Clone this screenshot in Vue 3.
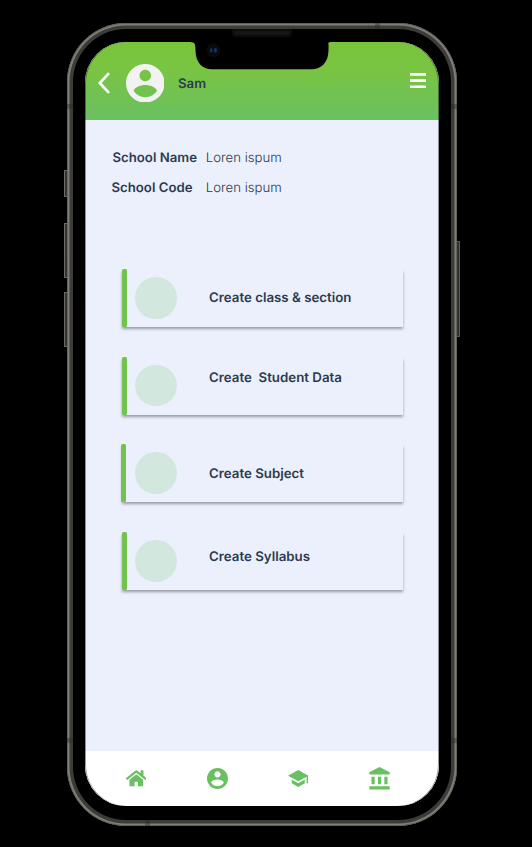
<script setup>
const fields = [
  { label: 'School Name', value: 'Loren ispum', key: 'name' },
  { label: 'School Code', value: 'Loren ispum', key: 'code' },
]
const cards = [
  { title: 'Create class & section', key: 'section' },
  { title: 'Create  Student Data', key: 'student' },
  { title: 'Create Subject', key: 'subject' },
  { title: 'Create Syllabus', key: 'syllabus' },
]
const accountPath =
  'M12 2C6.48 2 2 6.48 2 12s4.48 10 10 10 10-4.48 10-10S17.52 2 12 2zm0 3c1.66 0 3 1.34 3 3s-1.34 3-3 3-3-1.34-3-3 1.34-3 3-3zm0 14.2c-2.5 0-4.71-1.28-6-3.22.03-1.99 4-3.08 6-3.08 1.99 0 5.97 1.09 6 3.08-1.29 1.94-3.5 3.22-6 3.22z'
const nav = [
  {
    key: 'home',
    box: '0 32 576 448',
    path: 'M280.37 148.26L96 300.11V464a16 16 0 0 0 16 16l112.06-.29a16 16 0 0 0 15.92-16V368a16 16 0 0 1 16-16h64a16 16 0 0 1 16 16v95.64a16 16 0 0 0 16 16.05L464 480a16 16 0 0 0 16-16V300L295.67 148.26a12.19 12.19 0 0 0-15.3 0zM571.6 251.47L488 182.56V44.05a12 12 0 0 0-12-12h-56a12 12 0 0 0-12 12v72.61L318.47 43a48 48 0 0 0-61 0L4.34 251.47a12 12 0 0 0-1.6 16.9l25.5 31A12 12 0 0 0 45.15 301l235.22-193.74a12.19 12.19 0 0 1 15.3 0L530.9 301a12 12 0 0 0 16.9-1.6l25.5-31a12 12 0 0 0-1.7-16.93z',
  },
  { key: 'account', box: '2 2 20 20', path: accountPath },
  {
    key: 'school',
    box: '1 3 22 18',
    path: 'M5 13.18v4L12 21l7-3.82v-4L12 17l-7-3.82zM12 3L1 9l11 6 9-4.91V17h2V9L12 3z',
  },
  {
    key: 'bank',
    box: '2 1 19 21',
    path: 'M4 10v7h3v-7H4zm6 0v7h3v-7h-3zM2 22h19v-3H2v3zm14-12v7h3v-7h-3zm-4.5-9L2 6v2h19V6l-9.5-5z',
  },
]
</script>

<template>
  <div class="stage">
    <div class="phone">
      <i class="button mute"></i>
      <i class="button volume-up"></i>
      <i class="button volume-down"></i>
      <i class="button power"></i>
      <i class="band band-tr"></i>
      <i class="band band-bl"></i>
      <i class="band band-l1"></i>
      <i class="band band-l2"></i>
      <i class="band band-r1"></i>
      <i class="band band-r2"></i>
      <div class="bezel">
        <i class="speaker"></i>
        <div class="screen">
          <header class="header">
            <svg class="back" viewBox="0 0 12 22"><path d="M11 1.2 1.8 11l9.2 9.8" /></svg>
            <svg class="avatar" viewBox="2 2 20 20"><path :d="accountPath" /></svg>
            <span class="user">Sam</span>
            <svg class="menu" viewBox="0 0 16 16">
              <path d="M0 0h16v2.7H0zM0 6.2h16v2.7H0zM0 12.4h16v2.7H0z" />
            </svg>
          </header>
          <main class="content">
            <dl class="fields">
              <div v-for="f in fields" :key="f.key" class="field" :class="f.key">
                <dt>{{ f.label }}</dt>
                <dd>{{ f.value }}</dd>
              </div>
            </dl>
            <div class="cards">
              <div v-for="c in cards" :key="c.key" class="card" :class="c.key">
                <i class="accent"></i>
                <i class="dot"></i>
                <span class="title">{{ c.title }}</span>
              </div>
            </div>
          </main>
          <nav class="nav">
            <span v-for="n in nav" :key="n.key" class="slot">
              <svg :class="n.key" :viewBox="n.box"><path :d="n.path" /></svg>
            </span>
          </nav>
        </div>
        <svg class="notch" viewBox="0 0 142 30">
          <path d="M3 0V2.3C6 2.3 7.2 3.4 7.3 7L7.6 12C8 22 14 29.3 24 29.3H123.5C133.5 29.3 140 22 140.4 12L140.6 7C140.7 3.4 139.5 2.3 142 2.3V0Z" />
          <circle cx="25.5" cy="10.4" r="7" fill="#080a0c" />
          <circle cx="25.5" cy="10.4" r="4" fill="#060c16" />
          <ellipse cx="23.2" cy="10.3" rx="1.3" ry="2.4" fill="#12343b" />
          <ellipse cx="27.5" cy="10.4" rx="1.6" ry="2.4" fill="#12306e" />
        </svg>
      </div>
    </div>
  </div>
</template>

<style>
body {
  margin: 0;
  background: #000;
}
</style>

<style scoped>
.stage {
  box-sizing: border-box;
  width: 532px;
  height: 847px;
  padding: 23px 75px 21px 67px;
  background: #000;
  overflow: hidden;
  font-family: Inter, "Liberation Sans", sans-serif;
  color: #2b3a4f;
  text-rendering: geometricPrecision;
}
.phone {
  position: relative;
  box-sizing: border-box;
  height: 803px;
  padding: 6px;
  border-radius: 59px;
  background: #3d3c39;
  box-shadow: inset 0 0 0 0.7px #5a5956, inset 0 0 0 2.5px #7f7d7a;
}
.bezel {
  position: relative;
  box-sizing: border-box;
  height: 100%;
  padding: 13px 12px 14px;
  border-radius: 53px;
  background: #000;
}
.button {
  position: absolute;
  left: -3px;
  box-sizing: border-box;
  width: 3px;
  border: 1px solid #6d6c69;
  border-right: 0;
  border-radius: 1px 0 0 1px;
  background: #33322f;
}
.mute { top: 147px; height: 27px; }
.volume-up { top: 200px; height: 55px; }
.volume-down { top: 269px; height: 55px; }
.power {
  left: auto;
  right: -3px;
  top: 218px;
  height: 96px;
  border: 1px solid #5c5b58;
  border-left: 0;
  border-radius: 0 1px 1px 0;
}
.band {
  position: absolute;
  background: rgba(40, 40, 38, 0.4);
}
.band-tr { right: 77px; top: 0; width: 5px; height: 6px; }
.band-bl { left: 78px; bottom: 0; width: 5px; height: 6px; }
.band-l1, .band-l2 { left: 0; width: 6px; height: 5px; }
.band-r1, .band-r2 { right: 0; width: 6px; height: 5px; }
.band-l1, .band-r1 { top: 81px; }
.band-l2, .band-r2 { bottom: 83px; }
.speaker {
  position: absolute;
  top: 0;
  left: 159px;
  width: 60px;
  height: 8px;
  border-radius: 1px 1px 4px 4px;
  background: #151515;
  box-shadow: inset 0 0 0 2px #0b0b0b;
}
.screen {
  position: relative;
  display: flex;
  flex-direction: column;
  height: 100%;
  border-radius: 41px;
  overflow: hidden;
  background: #ecf0fd;
}
.screen::after {
  content: "";
  position: absolute;
  inset: 0;
  border-radius: 41px;
  box-shadow: inset 1px 0 rgba(0, 0, 0, 0.4), inset -1px 0 rgba(0, 0, 0, 0.4);
}
.notch {
  position: absolute;
  top: 10.8px;
  left: 114.7px;
  width: 142px;
  height: 30px;
}
.header {
  box-sizing: border-box;
  display: flex;
  align-items: center;
  flex: 0 0 78.4px;
  padding: 4px 13px 0 13px;
  background: linear-gradient(#7ac43c 0%, #79c442 35%, #6ac062 100%);
}
.back {
  width: 12px;
  height: 22px;
  fill: none;
  stroke: #fff;
  stroke-width: 2.6;
}
.avatar {
  width: 38.6px;
  height: 38.6px;
  margin-left: 15.8px;
  fill: #f2f2f2;
}
.user {
  margin: 1px 0 0 13.6px;
  font-size: 13.2px;
  font-weight: 600;
}
.menu {
  width: 16px;
  height: 16px;
  margin: 0 0 4px auto;
  fill: #fff;
}
.content {
  flex: 1;
  padding: 27.8px 36px 0 26.5px;
}
.fields {
  display: flex;
  flex-direction: column;
  gap: 9.8px;
  margin: 0;
}
.field {
  display: grid;
  grid-template-columns: 94px auto;
  height: 20px;
  line-height: 20px;
  font-size: 13.2px;
  white-space: nowrap;
}
.field dt {
  margin-left: 1px;
  font-weight: 600;
}
.field.code dt {
  margin-left: 0;
}
.field dd {
  margin: 0 0 0 0.3px;
  font-weight: 300;
}
.cards {
  display: flex;
  flex-direction: column;
  gap: 29.6px;
  margin: 71px 0 0 10.2px;
}
.card {
  display: flex;
  height: 58px;
  background: #ecf0fd;
  box-shadow: 0 2.7px 2.7px rgba(0, 0, 0, 0.35);
}
.accent {
  width: 5px;
  border-radius: 1.5px;
  background: #72c24f;
}
.subject .accent {
  margin-left: -0.7px;
  margin-right: 0.7px;
}
.dot {
  width: 41.5px;
  height: 41.5px;
  margin: 8.3px 0 0 8.8px;
  border-radius: 50%;
  background: #d2e8df;
}
.title {
  margin: 18.6px 0 0 32px;
  height: 20px;
  line-height: 20px;
  font-size: 13.3px;
  font-weight: 600;
  white-space: pre;
}
.student .title { margin-top: 11.3px; }
.subject .title { margin-top: 19.9px; }
.syllabus .title { margin-top: 14.9px; }
.nav {
  box-sizing: border-box;
  display: grid;
  grid-template-columns: repeat(4, 81px);
  flex: 0 0 55px;
  padding-left: 10.6px;
  background: #fff;
}
.slot {
  display: flex;
  align-items: center;
  justify-content: center;
}
.nav svg {
  fill: #68c060;
}
.home { width: 20.6px; height: 16.5px; }
.account { width: 21px; height: 21px; }
.school { width: 20.5px; height: 17px; }
.bank { width: 21px; height: 22.5px; }
</style>
